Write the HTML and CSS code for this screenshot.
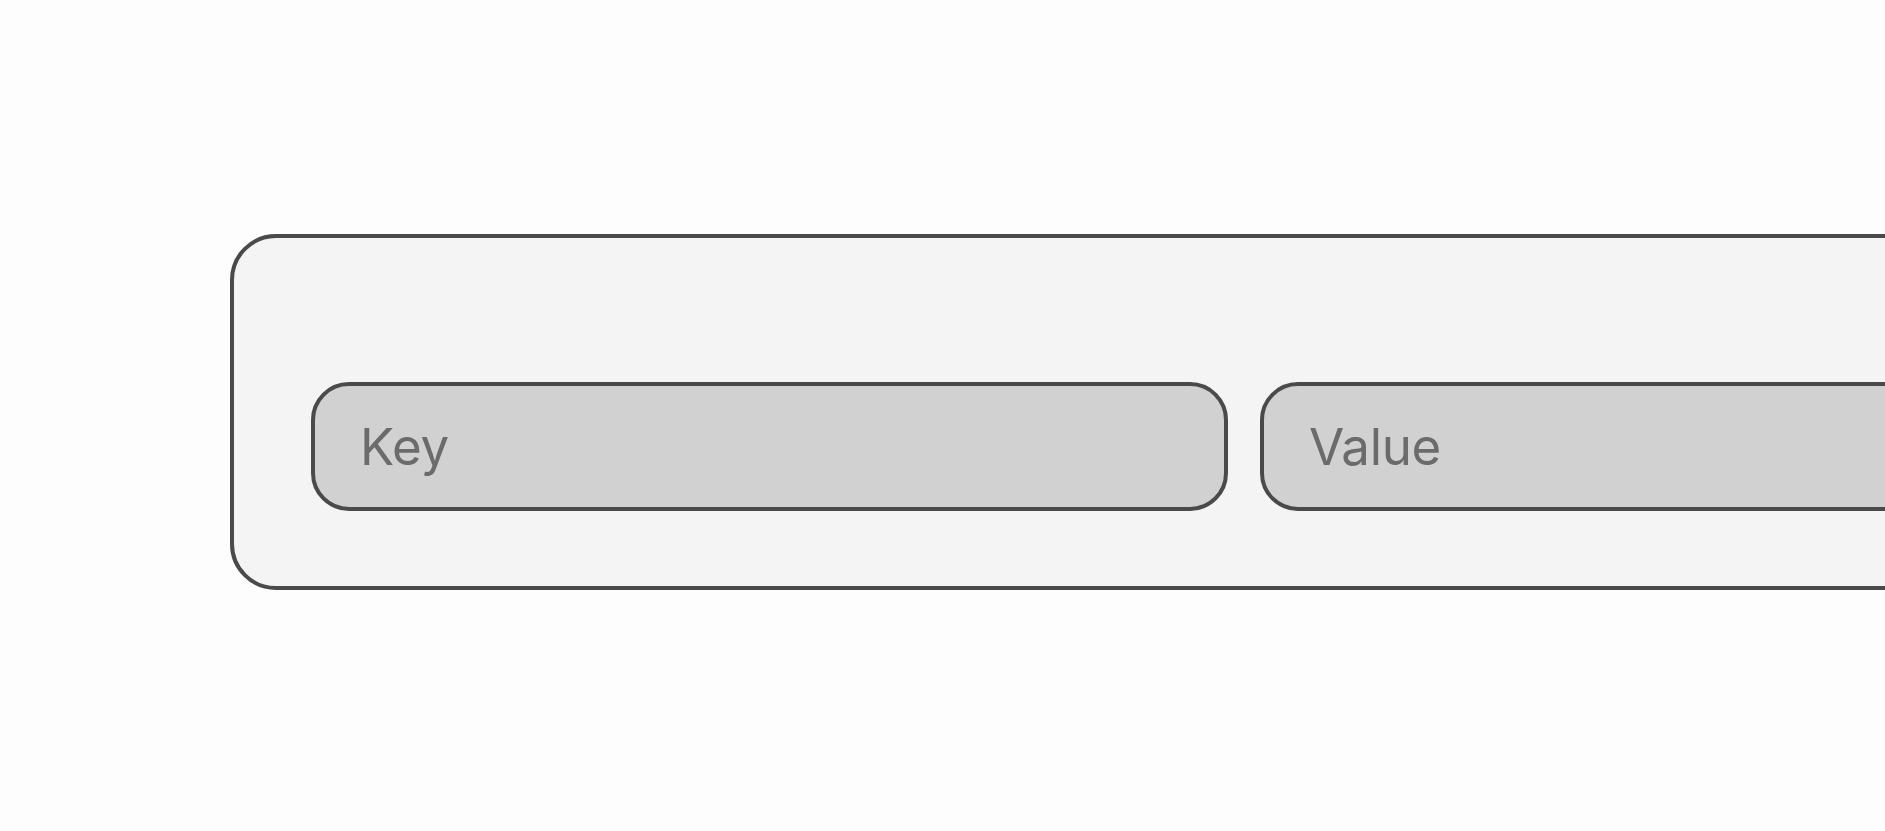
FILE: index.html
```html
<!DOCTYPE html>
<html lang="en">
  <head>
    <meta charset="UTF-8" />
    <meta name="viewport" content="width=device-width, initial-scale=1.0" />
    <title>Key Value</title>
    <link rel="stylesheet" href="styles.css">
  </head>
  <body>
    <div class="stage">
      <div class="panel">
        <input type="text" class="field key" placeholder="Key" />
        <input type="text" class="field value" placeholder="Value" />
      </div>
    </div>
  </body>
</html>
```

FILE: styles.css
```css
body {
  margin: 0;
  background-color: #fdfdfd;
  font-family: Inter, "Noto Sans", sans-serif;
  overflow: hidden;
}

.stage {
  padding: 234px 0 0 230px;
  height: 831px;
  box-sizing: border-box;
}

.panel {
  display: flex;
  gap: 32px;
  width: 2000px;
  padding: 144px 77px 75px;
  background-color: #f4f4f4;
  border: 4px solid #4a4a4a;
  border-radius: 46px;
}

.field {
  height: 129px;
  box-sizing: border-box;
  padding: 0 45px;
  font-family: Inter, "Noto Sans", sans-serif;
  font-size: 51px;
  letter-spacing: -0.3px;
  color: #333;
  background-color: #d1d1d1;
  border: 4px solid #4a4a4a;
  border-radius: 38px;
  outline: none;
}

.field::placeholder {
  color: #6b6b6b;
}

.key {
  width: 917px;
}

.value {
  flex: 1;
}
```
